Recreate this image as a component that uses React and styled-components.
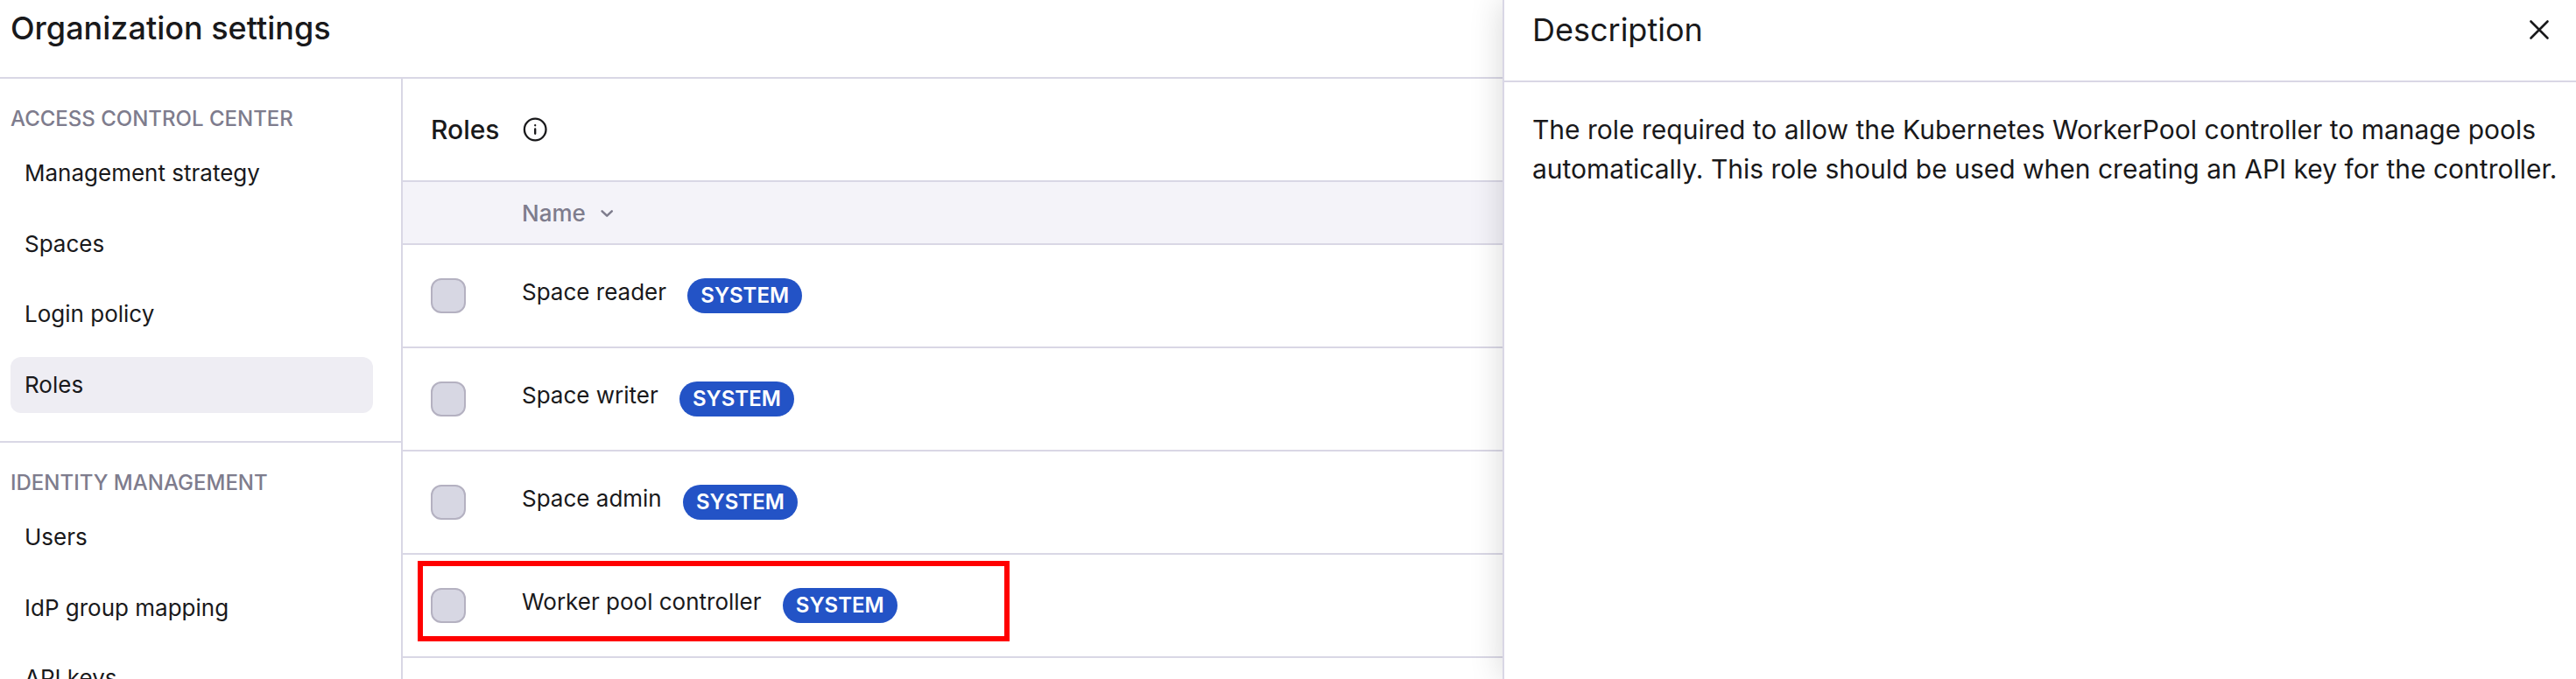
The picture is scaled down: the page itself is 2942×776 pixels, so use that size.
import React from "react";
import styled, { createGlobalStyle } from "styled-components";

const color = {
  text: "#19191b",
  muted: "#7e7c8d",
  border: "#d9d7e5",
  headBg: "#f4f3f9",
  selectedBg: "#eeedf3",
  boxFill: "#d7d7e3",
  boxBorder: "#b4b1c1",
  badge: "#2353c6",
  highlight: "#ff0000",
};

const GlobalStyle = createGlobalStyle`
  *, *::before, *::after { box-sizing: border-box; }
  body {
    margin: 0;
    overflow: hidden;
    background: #fff;
    color: ${color.text};
    font-family: Inter, "Liberation Sans", sans-serif;
    -webkit-font-smoothing: antialiased;
  }
`;

const Page = styled.div`
  position: relative;
  display: flex;
  flex-direction: column;
  height: 776px;
  overflow: hidden;
`;

const PageHeader = styled.header`
  flex: none;
  height: 90px;
  padding: 10px 12px 0;
  border-bottom: 2px solid ${color.border};
`;

const PageTitle = styled.h1`
  margin: 0;
  font-size: 36px;
  line-height: 44px;
  font-weight: 500;
`;

const Columns = styled.div`
  flex: 1;
  min-height: 0;
  display: grid;
  grid-template-columns: 460px 1fr;
`;

const Sidebar = styled.nav`
  min-height: 0;
  overflow: hidden;
  border-right: 2px solid ${color.border};
`;

const NavSection = styled.section`
  padding: 31px 32px 32px 12px;
  border-bottom: 2px solid ${color.border};
`;

const NavLabel = styled.h2`
  margin: 0 0 16px;
  color: ${color.muted};
  font-size: 24px;
  line-height: 29px;
  font-weight: 500;
  text-transform: uppercase;
`;

const NavList = styled.div`
  display: flex;
  flex-direction: column;
  gap: 16.66px;
`;

const NavItem = styled.a`
  height: 64px;
  padding: 16px 16px 17px;
  border-radius: 12px;
  background: ${(p) => (p.$selected ? color.selectedBg : "transparent")};
  font-size: 26px;
  line-height: 31px;
`;

const Main = styled.main`
  min-width: 0;
  overflow: hidden;
`;

const Toolbar = styled.div`
  display: flex;
  align-items: center;
  gap: 24px;
  height: 118px;
  padding: 0 32px;
  border-bottom: 2px solid ${color.border};
`;

const ToolbarTitle = styled.h2`
  margin: 0;
  font-size: 30px;
  line-height: 36px;
  font-weight: 500;
`;

const Icon = styled.svg`
  display: block;
  flex: none;
  width: ${(p) => p.$size}px;
  height: ${(p) => p.$size}px;
  fill: none;
  stroke: currentColor;
  stroke-linecap: round;
  stroke-linejoin: round;
`;

const TableHead = styled.div`
  display: flex;
  align-items: flex-start;
  gap: 8px;
  height: 72px;
  padding: 20px 32px 0 136px;
  border-bottom: 2px solid ${color.border};
  background: ${color.headBg};
  color: ${color.muted};
  font-size: 26px;
  line-height: 31px;
  font-weight: 500;
`;

const Row = styled.div`
  position: relative;
  display: flex;
  align-items: flex-start;
  height: 118px;
  padding: 38px 32px 0;
  border-bottom: 2px solid ${color.border};
`;

const Checkbox = styled.span`
  flex: none;
  width: 40px;
  height: 40px;
  margin-right: 64px;
  border: 2px solid ${color.boxBorder};
  border-radius: 12px;
  background: ${color.boxFill};
`;

const RoleName = styled.span`
  margin-right: 24px;
  font-size: 26px;
  line-height: 31px;
`;

const Badge = styled.span`
  height: 40px;
  padding: 5px 15.25px 6px;
  border-radius: 20px;
  background: ${color.badge};
  color: #fff;
  font-size: 24px;
  line-height: 29px;
  font-weight: 600;
`;

const Highlight = styled.span`
  position: absolute;
  top: 7px;
  left: 17px;
  width: 676px;
  height: 92px;
  border: 6px solid ${color.highlight};
`;

const Drawer = styled.aside`
  position: absolute;
  top: 0;
  right: 0;
  bottom: 0;
  width: 1226px;
  border-left: 2px solid ${color.border};
  background: #fff;
  box-shadow: 0 0 36px rgba(0, 0, 0, 0.16);
`;

const DrawerHeader = styled.header`
  display: flex;
  align-items: flex-start;
  justify-content: space-between;
  height: 94px;
  padding: 12px 26px 0 32px;
  border-bottom: 2px solid ${color.border};
`;

const DrawerTitle = styled.h2`
  margin: 0;
  font-size: 36px;
  line-height: 44px;
  font-weight: 400;
`;

const CloseButton = styled.button`
  margin: 6px 0 0;
  padding: 0;
  border: 0;
  background: none;
  color: inherit;
`;

const DrawerText = styled.p`
  margin: 0;
  padding: 32px 16px 0 32px;
  font-size: 30px;
  line-height: 45px;
`;

const sections = [
  { label: "Access Control Center", items: ["Management strategy", "Spaces", "Login policy", "Roles"] },
  { label: "Identity Management", items: ["Users", "IdP group mapping", "API keys"] },
];

const roles = ["Space reader", "Space writer", "Space admin", "Worker pool controller"];

export default function App() {
  return (
    <Page>
      <GlobalStyle />
      <PageHeader>
        <PageTitle>Organization settings</PageTitle>
      </PageHeader>
      <Columns>
        <Sidebar>
          {sections.map((section) => (
            <NavSection key={section.label}>
              <NavLabel>{section.label}</NavLabel>
              <NavList>
                {section.items.map((item) => (
                  <NavItem key={item} $selected={item === "Roles"}>
                    {item}
                  </NavItem>
                ))}
              </NavList>
            </NavSection>
          ))}
        </Sidebar>
        <Main>
          <Toolbar>
            <ToolbarTitle>Roles</ToolbarTitle>
            <Icon $size={32} viewBox="0 0 32 32" strokeWidth="2.3">
              <circle cx="16.2" cy="16" r="12.3" />
              <path d="M16.2 15.5v5.3M16.2 11.2v.1" />
            </Icon>
          </Toolbar>
          <TableHead>
            Name
            <Icon $size={32} viewBox="0 0 32 32" strokeWidth="2.5">
              <path d="M10.6 13.3l5.6 5.4 5.6-5.4" />
            </Icon>
          </TableHead>
          {roles.map((role) => (
            <Row key={role}>
              <Checkbox />
              <RoleName>{role}</RoleName>
              <Badge>SYSTEM</Badge>
              {role === "Worker pool controller" && <Highlight />}
            </Row>
          ))}
        </Main>
      </Columns>
      <Drawer>
        <DrawerHeader>
          <DrawerTitle>Description</DrawerTitle>
          <CloseButton aria-label="Close">
            <Icon $size={32} viewBox="0 0 32 32" strokeWidth="2.6">
              <path d="M6.5 6.5l19 19M25.5 6.5l-19 19" />
            </Icon>
          </CloseButton>
        </DrawerHeader>
        <DrawerText>
          The role required to allow the Kubernetes WorkerPool controller to manage pools
          automatically. This role should be used when creating an API key for the controller.
        </DrawerText>
      </Drawer>
    </Page>
  );
}
